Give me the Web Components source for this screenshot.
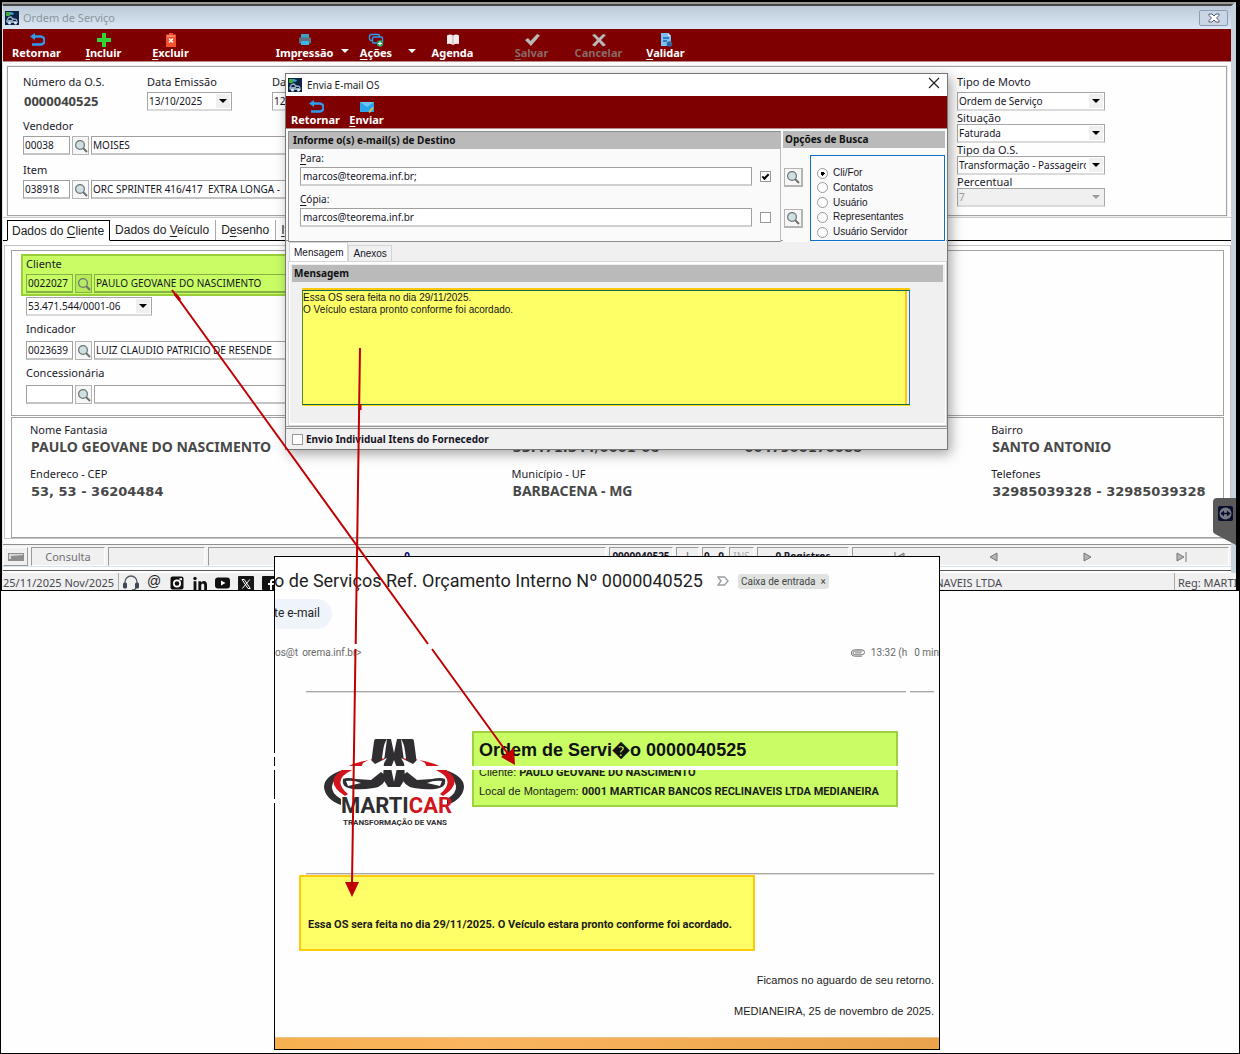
<!DOCTYPE html>
<html lang="pt-BR">
<head>
<meta charset="utf-8">
<meta name="viewport" content="width=device-width, initial-scale=1">
<title>Ordem de Serviço</title>
<style>
  body { margin: 0; background: #fefefe; font: 11px/16px "Noto Sans", sans-serif; color: #1a1a2a; }
  *, ::before { box-sizing: border-box; }
</style>
</head>
<body>
<app-desktop></app-desktop>

<script>
const BASE = `*, ::before, ::after { box-sizing: border-box; }
  button, input, select, textarea { font: inherit; color: inherit; margin: 0; }
  button { border: 0; padding: 0; background: none; }
  u { text-underline-offset: 2px; }`;

function define(name, html) {
  customElements.define(name, class extends HTMLElement {
    connectedCallback() {
      if (this.shadowRoot) return;
      const tpl = document.createElement('template');
      tpl.innerHTML = `<style>${BASE}</style>` + (typeof html === 'function' ? html(this) : html);
      this.attachShadow({ mode: 'open' }).append(tpl.content.cloneNode(true));
    }
  });
}

const ICONS = {
  app: ['0 0 14 14', `<rect width="14" height="14" fill="#0d2447"/><path d="M1 1h5l1 2-3 2H1z" fill="#3fae3c"/><path d="M5 1l4 1-1 2-3-1z" fill="#39a0e0"/><path d="M1 10l2-4 3-1 2 2 4 1 1 4H2z" fill="#8ea7bd"/><path d="M4 7h2l1 2H3zM8 9h3v1H8z" fill="#0d2447"/><circle cx="4.500" cy="12" r="1.500" fill="#d8e4ec"/><circle cx="10.500" cy="12" r="1.500" fill="#d8e4ec"/>`],
  back: ['0 0 16 14', `<path d="M6 0L1 3.500 6 7z" fill="#2e9bf0"/><path d="M4 3.500h7.500a3.800 3.800 0 0 1 0 8H3" fill="none" stroke="#2e9bf0" stroke-width="2.400"/>`],
  plus: ['0 0 14 14', `<path d="M5 0h4v5h5v4H9v5H5V9H0V5h5z" fill="#35d435"/>`],
  trash: ['0 0 14 14', `<path d="M5 0h4v1.500h3V14H2V1.500h3z" fill="#f4512c"/><path d="M3 3h8" stroke="#ffb49c"/><path d="M5 5.500l4 4M9 5.500l-4 4" stroke="#fff" stroke-width="1.500"/>`],
  print: ['0 0 14 14', `<path d="M3 1h8v4H3z" fill="#39a3c9"/><path d="M1 4.500h12v6H1z" fill="#5e7181"/><path d="M3 8h8v4H3z" fill="#3eb4e8"/>`],
  actions: ['0 0 16 14', `<rect x="1.500" y="1.500" width="10" height="6" rx="1.500" fill="none" stroke="#2e9bf0" stroke-width="1.400"/><rect x="4.500" y="4" width="10" height="6" rx="1.500" fill="#7f0000" stroke="#2e9bf0" stroke-width="1.400"/><circle cx="12" cy="10.500" r="3.200" fill="#2f9c62"/><path d="M12 8.500v4M10 10.500h4" stroke="#fff" stroke-width="1.200"/>`],
  book: ['0 0 14 14', `<path d="M1 2.500Q4 .5 7 2.500 10 .5 13 2.500V11q-3-1-6 1-3-2-6-1z" fill="#f4ecec"/><path d="M7 2.500V12" stroke="#c9a9a9"/>`],
  check: ['0 0 16 14', `<path d="M1 7l3-2 2.500 3L13 1l3 1.500L7 13z" fill="#b9b9b9"/>`],
  cross: ['0 0 16 14', `<path d="M1 2l3-1 4 4 4-4 3 1-5 5 5 5-3 1.500-4-4.500-4 4.500L1 12l5-5z" fill="#b9b9b9"/>`],
  doc: ['0 0 14 14', `<path d="M2 0h7l3 3v10H2z" fill="#7cc0f5"/><path d="M9 0l3 3H9z" fill="#d6ecff"/><path d="M4 5h6M4 8h4" stroke="#1467b3" stroke-width="1.400"/><circle cx="10.500" cy="11" r="2.800" fill="#33679b"/>`],
  mail: ['0 0 14 14', `<path d="M0 2h14v10H0z" fill="#29a4ef"/><path d="M0 2l7 5 7-5" fill="#6cc6fa"/><path d="M9 12.500l4-5" stroke="#e4c13c" stroke-width="1.800"/>`],
  lens: ['0 0 14 14', `<path d="M9 9l4 4" stroke="#6f6f6f" stroke-width="2"/><circle cx="6" cy="6" r="4.400" fill="var(--glass,#cfe0e2)" stroke="#6b7474" stroke-width="1.200"/>`],
  close: ['0 0 12 12', `<path d="M1 1l10 10M11 1L1 11" stroke="#222" stroke-width="1.200"/>`],
  mdiclose: ['0 0 12 10', `<path d="M1 1h3l2 2 2-2h3v1.500L8.500 5 11 7.500V9H8L6 7 4 9H1V7.500L3.500 5 1 2.500z" fill="#fff" stroke="#555b70" stroke-width="1"/>`],
  caret: ['0 0 8 4', `<path d="M0 0h8L4 4z" fill="currentColor"/>`],
  keyb: ['0 0 16 8', `<rect width="16" height="8" fill="#8d8d8d"/><path d="M1 1h14v1L3 3v3H1z" fill="#d9d9d9"/>`],
  first: ['0 0 12 10', `<path d="M1 0v10" stroke="#777"/><path d="M10 1v8L3 5z" fill="#b5b5b5" stroke="#777"/>`],
  prev: ['0 0 12 10', `<path d="M9 1v8L2 5z" fill="#b5b5b5" stroke="#777"/>`],
  next: ['0 0 12 10', `<path d="M3 1v8l7-4z" fill="#b5b5b5" stroke="#777"/>`],
  last: ['0 0 12 10', `<path d="M2 1v8l7-4zM11 0v10" fill="#b5b5b5" stroke="#777"/>`],
  headset: ['0 0 16 16', `<path d="M2 9V7a6 6 0 0 1 12 0v2M13 12q0 3-4 3" fill="none" stroke="#555b66" stroke-width="1.300"/><rect x="0" y="7.500" width="4" height="6" rx="1.500" fill="#3f4656"/><rect x="12" y="7.500" width="4" height="6" rx="1.500" fill="#3f4656"/>`],
  insta: ['0 0 14 14', `<rect x=".5" y=".5" width="13" height="13" rx="2" fill="#111"/><circle cx="7" cy="7.500" r="4" fill="#fff"/><circle cx="7" cy="7.500" r="2.300" fill="#111"/><path d="M9.500 2.200h2.500v2H9.500z" fill="#fff"/>`],
  linkedin: ['0 0 14 14', `<circle cx="2" cy="2.500" r="1.700" fill="#111"/><path d="M.6 5.200h2.800V14H.6zM5.400 5.200H8v1.200q1-1.500 2.800-1.500Q14 5 14 9v5h-2.800V9.500q0-2-1.400-2T8.200 9.500V14H5.400z" fill="#111"/>`],
  youtube: ['0 0 16 14', `<rect x="0" y="1.500" width="15" height="11" rx="3" fill="#111"/><path d="M6 4.500v5L10.500 7z" fill="#fff"/>`],
  xapp: ['0 0 16 16', `<rect width="16" height="16" rx="1" fill="#161616"/><path d="M4 3.500h2.300l6 9H10z" fill="none" stroke="#fff"/><path d="M11.800 3.500L4.300 12.500" stroke="#fff"/>`],
  facebook: ['0 0 14 14', `<rect width="14" height="14" rx="1" fill="#111"/><path d="M8 14V9H6V7h2V5.500Q8 3 10.500 3H12v2h-1.200q-.8 0-.8.800V7h2l-.3 2H10v5z" fill="#fff"/>`],
  important: ['0 0 12 10', `<path d="M1 1h6.500L11 5 7.500 9H1l3-4z" fill="none" stroke="#9aa0a6" stroke-width="1.400"/>`],
  clip: ['0 0 14 8', `<path d="M11.500 2H4a1.800 1.800 0 0 0 0 3.800h7A2.400 2.400 0 0 0 11 .8H3.600a3.200 3.200 0 0 0 0 6.400H11M4 3.900h6.500" fill="none" stroke="#777" stroke-width="1"/>`],
  remote: ['0 0 23 47', `<path d="M4 0h19v47L2 36Q0 35 0 33V4Q0 0 4 0z" fill="#5a5a5a"/><rect x="5" y="8" width="15" height="15" rx="2" fill="#0a0d2c"/><circle cx="12.500" cy="15.500" r="6" fill="#777a84"/><path d="M8 15.500h9" stroke="#0a0d2c" stroke-width="1.500"/><path d="M11 12.500v6l-3.500-3zM14 12.500v6l3.500-3z" fill="#0a0d2c"/>`]
};

define('ts-icon', el => {
  const [box, body] = ICONS[el.getAttribute('name')];
  const [, , w, h] = box.split(' ');
  return `<style>:host { display: inline-flex; flex: none; } svg { display: block; }</style>
  <svg viewBox="${box}" width="${w}" height="${h}" aria-hidden="true">${body}</svg>`;
});

define('ts-tool', el => `<style>
  :host { display: block; width: var(--tool-width, 67px); }
  button { display: flex; flex-direction: column; align-items: center; width: 100%; color: #fff; font: bold 11px/12px "Noto Sans", sans-serif; }
  button:disabled { color: #8a6a6a; }
</style><button type="button" ${el.hasAttribute('disabled') ? 'disabled' : ''}><ts-icon name="${el.getAttribute('icon')}"></ts-icon><span><slot></slot></span></button>`);

define('ts-toolbar', `<style>
  :host { display: flex; align-items: flex-start; height: 33px; padding-top: 4px; background: #7f0000; border-bottom: 1px solid #b98a8a; color: #fff; }
</style><slot></slot>`);

define('ts-menu-caret', el => `<style>
  :host { display: block; } button { display: flex; justify-content: center; align-items: center; width: 14px; height: 30px; color: #fff; padding-top: 6px; }
</style><button type="button" aria-label="${el.getAttribute('label')}"><ts-icon name="caret"></ts-icon></button>`);

define('ts-panel', `<style>
  :host { display: block; border: 1px solid #a2a2a2; outline: 1px solid #efefef; }
</style><slot></slot>`);

define('ts-select', el => `<style>
  :host { display: flex; flex-direction: column; }
  label { line-height: var(--label-line, 13px); margin-bottom: var(--label-gap, 0px); }
  .box { display: flex; position: relative; height: 19px; border: 1px solid #a6a6a6; border-bottom: 2px solid #dadada; background: #fff; }
  select { appearance: none; flex: 1; min-width: 0; border: 0; background: none; padding: 0 18px 0 1px; font: var(--value-font); color: #15151f; opacity: 1; outline: 0; }
  ts-icon { position: absolute; right: 1px; top: 1px; width: 14px; height: 14px; align-items: center; justify-content: center; background: #f0f0f0; color: #000; pointer-events: none; }
  .off { background: #f0f0f0; } .off select, .off ts-icon { color: #9b9b9b; }
</style>
${el.getAttribute('label') ? `<label for="s">${el.getAttribute('label')}</label>` : ''}
<div class="box ${el.hasAttribute('disabled') ? 'off' : ''}"><select id="s" ${el.hasAttribute('disabled') ? 'disabled' : ''} aria-label="${el.getAttribute('label') || el.getAttribute('name')}"><option>${el.getAttribute('value')}</option></select><ts-icon name="caret"></ts-icon></div>`);

define('ts-lookup', el => `<style>
  :host { display: flex; flex-direction: column; }
  label { line-height: 16px; margin-bottom: var(--label-gap, 2px); }
  .row { display: flex; gap: 2px; height: 19px; }
  input { border: 1px solid #a0a0a0; border-bottom-width: 2px; border-bottom-color: #c4c4c4; background: var(--field-bg, #fff); padding: 0 1px; font: var(--value-font); color: #15151f; min-width: 0; border-radius: 0; }
  input.code { width: 47px; } input.name { flex: 1; }
  :host([tone=green]) input { border-color: #86b145; }
  :host([tone=green]) button { border-color: #86b145; background: #b5ea58; }
  button { width: 17px; border: 1px solid #b4b4b4; background: #f6f6f6; display: flex; align-items: center; justify-content: center; }
</style>
<label for="c">${el.getAttribute('label')}</label>
<div class="row"><input id="c" class="code" value="${el.getAttribute('code')}"><button type="button" aria-label="Pesquisar ${el.getAttribute('label')}"><ts-icon name="lens"></ts-icon></button><input class="name" aria-label="Nome ${el.getAttribute('label')}" value="${el.getAttribute('value')}"></div>`);

define('ts-fact', el => `<style>
  :host { display: block; min-width: 0; white-space: nowrap; }
  dl, dd { margin: 0; } dt { line-height: 16px; }
  dd { padding-left: 1px; font: bold 14px/17px "Noto Sans", sans-serif; color: #484848; }
  dd.num { font: bold 13px/19px "DejaVu Sans", sans-serif; }
</style><dl><dt>${el.getAttribute('label') || '&nbsp;'}</dt><dd class="${el.hasAttribute('numeric') ? 'num' : ''}"><slot></slot></dd></dl>`);

define('os-header', `<style>
  :host { display: flex; justify-content: space-between; height: 148px; padding: 7px 0 0 15px; --value-font: 10px/14px "Noto Sans", sans-serif; }
  .left { display: flex; flex-direction: column; gap: 7px; width: 500px; }
  .first { display: flex; gap: 40px; }
  .number { width: 84px; }
  .number p { margin: 0; line-height: 16px; white-space: nowrap; } .number strong { display: block; margin-top: 2px; padding-left: 1px; font: bold 13px/19px "Noto Sans", sans-serif; color: #444; }
  .date { width: 85px; --label-line: 16px; --label-gap: 2px; }
  .right { display: flex; flex-direction: column; width: 269px; }
  .right ts-select { width: 148px; }
  .right ts-select:first-child { --label-line: 16px; --label-gap: 2px; }
</style>
<div class="left">
  <div class="first">
    <div class="number"><p>Número da O.S.</p><strong>0000040525</strong></div>
    <ts-select class="date" label="Data Emissão" value="13/10/2025"></ts-select>
    <ts-select class="date" label="Data" value="12/11/2025"></ts-select>
  </div>
  <ts-lookup label="Vendedor" code="00038" value="MOISES"></ts-lookup>
  <ts-lookup label="Item" code="038918" value="ORC SPRINTER 416/417  EXTRA LONGA -"></ts-lookup>
</div>
<div class="right">
  <ts-select label="Tipo de Movto" value="Ordem de Serviço"></ts-select>
  <ts-select label="Situação" value="Faturada"></ts-select>
  <ts-select label="Tipo da O.S." value="Transformação - Passageiros"></ts-select>
  <ts-select label="Percentual" value="7" disabled></ts-select>
</div>`);

define('os-tabs', `<style>
  :host { display: flex; height: 21px; padding: 0 0 0 4px; border-bottom: 1px solid #000; font: 12px/20px "Liberation Sans", sans-serif; color: #222; }
  button { padding: 0 6px 0 5px; height: 20px; white-space: nowrap; border-right: 1px solid #aaa; }
  button[aria-selected=true] { height: 21px; border: 1px solid #000; border-bottom-color: #fff; background: #fff; padding: 0 5px 0 4px; }
</style>
<button role="tab" aria-selected="true">Dados do <u>C</u>liente</button><button role="tab">Dados do <u>V</u>eículo</button><button role="tab">D<u>e</u>senho</button><button role="tab"><u>I</u>tens</button>`);

define('os-client', `<style>
  :host { display: block; padding: 4px 6px 0 6px; border: 1px solid #c4c4c4; --value-font: 10px/14px "Noto Sans", sans-serif; }
  ts-panel { outline: 0; } ts-panel + ts-panel { margin-top: 1px; }
  .fields { height: 164px; padding: 3px 9px 0; --label-gap: 4px; }
  .col { width: 500px; display: flex; flex-direction: column; gap: 5px; padding: 0 5px; }
  .mark { width: 500px; height: 42px; padding: 0 3px; border: 2px solid #98cf38; background: #c8fd64; --field-bg: #c8fd64; --glass: #b8ec66; --label-gap: 2px; }
  .doc { width: 126px; margin-top: 1px; }
  .facts { height: 119px; padding: 4px 0 0 18px; display: grid; grid-template-columns: 482fr 232fr 248fr 232fr; grid-auto-rows: 35px; row-gap: 9px; align-content: start; }
</style>
<ts-panel><div class="fields">
  <div class="mark"><ts-lookup tone="green" label="Cliente" code="0022027" value="PAULO GEOVANE DO NASCIMENTO"></ts-lookup></div>
  <div class="col">
    <ts-select class="doc" name="CPF/CNPJ" value="53.471.544/0001-06"></ts-select>
    <ts-lookup label="Indicador" code="0023639" value="LUIZ CLAUDIO PATRICIO DE RESENDE"></ts-lookup>
    <ts-lookup label="Concessionária" code="" value=""></ts-lookup>
  </div>
</div></ts-panel>
<ts-panel><div class="facts">
  <ts-fact label="Nome Fantasia">PAULO GEOVANE DO NASCIMENTO</ts-fact>
  <ts-fact numeric>53.471.544/0001-06</ts-fact>
  <ts-fact numeric>0047900170088</ts-fact>
  <ts-fact label="Bairro">SANTO ANTONIO</ts-fact>
  <ts-fact label="Endereco - CEP" numeric>53, 53 - 36204484</ts-fact>
  <ts-fact label="Município - UF">BARBACENA - MG</ts-fact>
  <span></span>
  <ts-fact label="Telefones" numeric>32985039328 - 32985039328</ts-fact>
</div></ts-panel>`);

define('os-status', `<style>
  :host { display: flex; gap: 3px; height: 22px; padding: 2px 2px 0 0; background: #f4f4f4; border-top: 1px solid #8e8e8e; font: bold 10px/17px "Noto Sans", sans-serif; }
  span, nav { display: flex; align-items: center; justify-content: center; height: 19px; overflow: hidden; white-space: nowrap; background: #f0f0f0; border: 1px solid #fdfdfd; border-top-color: #9a9a9a; border-left-color: #9a9a9a; flex: none; }
  .key { width: 25px; border-color: #fdfdfd #9a9a9a #9a9a9a #fdfdfd; } .mode { width: 74px; color: #707070; font: 11px/17px "Noto Sans", sans-serif; } .gap { width: 97px; }
  .zero { width: 398px; color: #00007a; } .os { width: 64px; } .dot { width: 23px; color: #777; } .pair { width: 24px; } .ins { width: 25px; color: #aaa; font-weight: 400; } .reg { width: 92px; }
  nav { flex: 1; justify-content: space-around; }
  button { display: flex; }
</style>
<span class="key"><ts-icon name="keyb"></ts-icon></span><span class="mode">Consulta</span><span class="gap"></span><span class="zero">0</span><span class="os">0000040525</span><span class="dot">|</span><span class="pair">0 - 0</span><span class="ins">INS</span><span class="reg">0 Registros</span>
<nav aria-label="Registros"><button aria-label="Primeiro"><ts-icon name="first"></ts-icon></button><button aria-label="Anterior"><ts-icon name="prev"></ts-icon></button><button aria-label="Próximo"><ts-icon name="next"></ts-icon></button><button aria-label="Último"><ts-icon name="last"></ts-icon></button></nav>`);

define('os-footer', `<style>
  :host { display: flex; height: 17px; overflow: hidden; background: #f0f0f0; color: #484850; font: 11px/19px "Noto Sans", sans-serif; white-space: nowrap; }
  .date { width: 117px; padding-left: 1px; border-right: 1px solid #aaa; }
  .links { display: flex; gap: 7px; padding-left: 4px; }
  a { width: 16px; display: flex; justify-content: center; padding-top: 3px; color: #222; text-decoration: none; }
  a.at { padding-top: 1px; font: 14px/15px "Liberation Sans", sans-serif; }
  .links a:first-child { padding-top: 2px; }
  .company { flex: 1; text-align: right; padding-right: 172px; }
  .reg { width: 62px; padding-left: 3px; border-left: 1px solid #aaa; overflow: hidden; }
</style>
<span class="date">25/11/2025 Nov/2025</span>
<div class="links"><a href="#suporte" aria-label="Suporte"><ts-icon name="headset"></ts-icon></a><a class="at" href="#email">@</a><a href="#instagram" aria-label="Instagram"><ts-icon name="insta"></ts-icon></a><a href="#linkedin" aria-label="LinkedIn"><ts-icon name="linkedin"></ts-icon></a><a href="#youtube" aria-label="YouTube"><ts-icon name="youtube"></ts-icon></a><a href="#x" aria-label="X"><ts-icon name="xapp"></ts-icon></a><a href="#facebook" aria-label="Facebook"><ts-icon name="facebook"></ts-icon></a></div>
<span class="company">MARTICAR BANCOS RECLINAVEIS LTDA</span><span class="reg">Reg: MARTICAR</span>`);

define('os-window', `<style>
  :host { display: flex; flex-direction: column; border: solid #000; border-width: 2px 4px 1px 2px; background: #fefefe; position: relative; }
  .frame { border: solid #9a9a9a; border-width: 4px 0 0 0; border-top-style: ridge; border-right: 5px solid #c6d2de; border-left: 1px solid #dfe6ee; }
  .title { display: flex; align-items: center; gap: 4px; height: 23px; padding: 0 3px 0 2px; background: linear-gradient(#bccad9, #dbe7f3); color: #8d959d; }
  .title h1 { flex: 1; margin: 0; padding-top: 1px; font: 11px/20px "Noto Sans", sans-serif; }
  .title button { width: 29px; height: 16px; display: flex; align-items: center; justify-content: center; border: 1px solid #8e9bb5; border-radius: 2px; background: #c8d6e6; }
  .gap { width: 67px; } .small { --tool-width: 48px; }
  ts-menu-caret.c2 { margin-left: 5px; } .sp { width: 12px; }
  .top { margin: 4px 4px 0 4px; }
  .sep { height: 3px; border-top: 1px solid #ccc; margin-top: 1px; }
  .client { margin: 4px 0 5px 1px; }
  .edge { height: 5px; border-top: 1px solid #d5e2f0; border-bottom: 1px solid #555; margin-bottom: 2px; }
  .remote { position: absolute; right: 0; top: 496px; }
</style>
<div class="frame">
  <div class="title"><ts-icon name="app"></ts-icon><h1>Ordem de Serviço</h1><button aria-label="Fechar"><ts-icon name="mdiclose"></ts-icon></button></div>
  <ts-toolbar>
    <ts-tool icon="back">Retornar</ts-tool><ts-tool icon="plus"><u>I</u>ncluir</ts-tool><ts-tool icon="trash"><u>E</u>xcluir</ts-tool><span class="gap"></span>
    <ts-tool icon="print">Imp<u>r</u>essão</ts-tool><ts-menu-caret label="Opções de impressão"></ts-menu-caret>
    <ts-tool class="small" icon="actions"><u>A</u>ções</ts-tool><ts-menu-caret class="c2" label="Mais ações"></ts-menu-caret>
    <ts-tool icon="book">Agenda</ts-tool><span class="sp"></span>
    <ts-tool icon="check" disabled><u>S</u>alvar</ts-tool><ts-tool icon="cross" disabled>Cancelar</ts-tool><ts-tool icon="doc"><u>V</u>alidar</ts-tool>
  </ts-toolbar>
  <ts-panel class="top"><os-header></os-header></ts-panel>
  <div class="sep"></div>
  <os-tabs></os-tabs>
  <os-client class="client"></os-client>
  <os-status></os-status>
  <div class="edge"></div>
</div>
<os-footer></os-footer>
<ts-icon class="remote" name="remote"></ts-icon>`);

define('email-dialog', `<style>
  :host { display: flex; flex-direction: column; border: 1px solid #777; background: #f0f0f0; box-shadow: 3px 4px 12px rgba(0,0,0,.35); color: #15151f; }
  .title { display: flex; align-items: center; gap: 5px; height: 22px; padding: 0 7px 0 2px; background: #fff; }
  h2 { flex: 1; margin: 0; font: 10px/20px "Noto Sans", sans-serif; color: #222; }
  h3 { margin: 0; padding: 0 4px; background: #bababa; font: bold 10px/17px "Noto Sans", sans-serif; color: #111; }
  ts-toolbar { --tool-width: 51px; padding-left: 4px; }
  .groups { display: grid; grid-template-columns: 493fr 163fr; gap: 2px; padding: 2px 1px 0 2px; height: 112px; background: #fafafa; border-bottom: 1px solid #999; }
  .group { border: 1px solid #8e8e8e; border-right-color: #bbb; background: #fafafa; }
  .busca { border: solid #fafafa; border-width: 0 1px 1px 0; }
  .busca h3 { padding: 0 2px; }
  .addr { padding: 1px 9px 0 11px; display: grid; grid-template-columns: 452fr 11px; column-gap: 8px; align-items: center; }
  .addr label { grid-column: 1 / 3; line-height: 17px; font-size: 10px; }
  .addr label.second { margin-top: 5px; }
  .addr input[type=text] { height: 19px; border: 1px solid #a0a0a0; border-bottom: 2px solid #cfcfcf; padding: 0 2px; background: #fff; font: 10px/14px "Noto Sans", sans-serif; min-width: 0; }
  input[type=checkbox] { appearance: none; width: 11px; height: 11px; border: 1px solid #999; background: #fff; }
  input[type=checkbox]:checked { display: grid; place-items: center; }
  input[type=checkbox]:checked::before { content: ""; width: 7px; height: 4px; border: solid #000; border-width: 0 0 2px 2px; transform: rotate(-45deg); margin-bottom: 2px; }
  .search { display: flex; gap: 7px; padding-left: 1px; }
  .lens { display: flex; flex-direction: column; gap: 22px; padding-top: 20px; }
  .lens button { width: 19px; height: 19px; border: 1px solid #b4b4b4; border-width: 1px 2px 2px 1px; background: #f6f6f6; display: flex; align-items: center; justify-content: center; }
  fieldset { flex: 1; display: flex; flex-direction: column; justify-content: space-between; height: 86px; margin: 7px 0 0; padding: 10px 0 1px 6px; border: 1px solid #0f70c8; min-width: 0; }
  fieldset label { display: flex; align-items: center; gap: 5px; font: 10px/14px "Liberation Sans", sans-serif; height: 14px; }
  input[type=radio] { appearance: none; margin: 0; width: 11px; height: 11px; border: 1px solid #999; border-radius: 50%; background: #fff; }
  input[type=radio]:checked { background: radial-gradient(#000 0 2px, #fff 2px); }
  .tabs { display: flex; align-items: flex-end; height: 21px; padding: 1px 3px 0; font: 10px/16px "Liberation Sans", sans-serif; }
  .tabs button { padding: 0 4px; height: 17px; border: 1px solid #d5d5d5; border-bottom: 0; }
  .tabs button[aria-selected=true] { height: 20px; background: #fff; }
  .page { margin: 0 1px 1px 3px; border: 1px solid #fff; border-top-width: 2px; border-bottom: 2px solid #fff; outline: 1px solid #d5d5d5; height: 163px; padding: 1px 2px; }
  .page h3 { padding: 0 2px; }
  .area { margin: 6px 33px 0 10px; }
  textarea { display: block; width: 100%; height: 115px; resize: none; border: 1px solid #1d73c4; border-top-color: #12684b; border-bottom-color: #12684b; border-left-color: #548a2a; padding: 1px 0; background: linear-gradient(#feff66, #feff66) no-repeat 0 0 / calc(100% - 4px) 100%, linear-gradient(#ffc90e, #ffc90e) no-repeat 0 0 / calc(100% - 2px) 100%, #f0f0f0; font: 10px/12px "Liberation Sans", sans-serif; color: #15151f; outline: 0; overflow: hidden; }
  .hl { border-top: 2px solid #ffc90e; border-bottom: 1px solid #ffd80e; }
  .foot { display: flex; align-items: center; gap: 3px; flex: 1; padding: 0 6px; border-top: 3px double #999; font: bold 10px/16px "Noto Sans", sans-serif; }
</style>
<div class="title"><ts-icon name="app"></ts-icon><h2>Envia E-mail OS</h2><button aria-label="Fechar"><ts-icon name="close"></ts-icon></button></div>
<ts-toolbar><ts-tool icon="back">Retornar</ts-tool><ts-tool icon="mail"><u>E</u>nviar</ts-tool></ts-toolbar>
<div class="groups">
  <div class="group"><h3>Informe o(s) e-mail(s) de Destino</h3>
    <div class="addr">
      <label for="para"><u>P</u>ara:</label><input id="para" type="text" value="marcos@teorema.inf.br;"><input type="checkbox" checked aria-label="Enviar para">
      <label for="copia" class="second"><u>C</u>ópia:</label><input id="copia" type="text" value="marcos@teorema.inf.br"><input type="checkbox" aria-label="Enviar cópia">
    </div>
  </div>
  <div class="group busca"><h3>Opções de Busca</h3>
    <div class="search">
      <div class="lens"><button aria-label="Buscar destinatário"><ts-icon name="lens"></ts-icon></button><button aria-label="Buscar cópia"><ts-icon name="lens"></ts-icon></button></div>
      <fieldset aria-label="Opções de Busca">
        <label><input type="radio" name="b" checked>Cli/For</label><label><input type="radio" name="b">Contatos</label><label><input type="radio" name="b">Usuário</label><label><input type="radio" name="b">Representantes</label><label><input type="radio" name="b">Usuário Servidor</label>
      </fieldset>
    </div>
  </div>
</div>
<div class="tabs"><button role="tab" aria-selected="true">Mensagem</button><button role="tab">Anexos</button></div>
<div class="page"><h3>Mensagem</h3><div class="area"><div class="hl"><textarea aria-label="Mensagem">Essa OS sera feita no dia 29/11/2025.
O Veículo estara pronto conforme foi acordado.</textarea></div></div></div>
<div class="foot"><input type="checkbox" id="ind"><label for="ind">Envio Individual Itens do Fornecedor</label></div>`);

define('marticar-logo', `<style>:host { display: block; flex: none; } svg { display: block; overflow: visible; }</style>
<svg width="144" height="92" viewBox="0 0 144 92" role="img" aria-label="Marticar">
  <path d="M20 32Q1 38 1 49q1 12 17 18v-6Q8 55 9 48q1-8 15-16z" fill="#302e30"/>
  <path d="M122 32q19 6 19 17-1 12-17 18v-6q10-6 9-13-1-8-15-16z" fill="#302e30"/>
  <path d="M22 58Q4 46 14 36 30 20 71 20t57 16q10 10-8 22l-3-2q12-10 5-18-14-13-51-13T20 38q-7 8 5 18z" fill="#d2151c"/>
  <path d="M20 41q4-2 13 0l15 1 10-8 5 4q-1 10-12 12-20 3-28-1-4-2-3-8z" fill="#302e30"/>
  <path d="M122 41q-4-2-13 0l-15 1-10-8-5 4q1 10 12 12 20 3 28-1 4-2 3-8z" fill="#302e30"/>
  <path d="M23 43q8-1 15 2l-13 3zM119 43q-8-1-15 2l13 3z" fill="#fff"/>
  <path d="M53 1h11q-3 4-4 12l-2 14-8 4-2-4Q50 10 51 4q0-3 2-3zM89 1H78q3 4 4 12l2 14 8 4 2-4q-2-17-3-23 0-3-2-3z" fill="#302e30"/>
  <path d="M64 1h4l3 14 3-14h4l3 22 1 18-5 8H65l-5-8 1-18z" fill="#302e30"/>
  <path d="M47 21l-7 4-4 9-9 5 17 1 12-6 8-14-12 6zM95 21l7 4 4 9 9 5-17 1-12-6-8-14 12 6z" fill="#fff"/>
  <path d="M68 30l3 14 3-14-3-8z" fill="#fff"/>
  <g font-family="Roboto, sans-serif" font-weight="bold">
    <text x="18" y="75" font-size="22" fill="#302e30">MARTI<tspan fill="#d2151c">CAR</tspan></text>
    <text x="20" y="87" font-size="8" fill="#302e30">TRANSFORMAÇÃO DE VANS</text>
  </g>
</svg>`);

define('email-view', `<style>
  :host { display: flex; flex-direction: column; border: 1px solid #000; background: #fefefe; overflow: hidden; color: #1b1b1b; font: 11px/16px "Liberation Sans", sans-serif; }
  .subject, .pill, .meta, .rules, .order, .note, .sign, .base { flex: none; }
  .subject { display: flex; align-items: center; height: 42px; padding-top: 6px; white-space: nowrap; }
  h2 { margin: 0 14px 0 -1px; font: 18px/24px Roboto, sans-serif; color: #1f1f1f; }
  .chip { margin-left: 9px; height: 15px; padding: 0 3px; border-radius: 3px; background: #e1e3e1; font: 10px/15px Roboto, sans-serif; color: #444; }
  .pill { align-self: flex-start; height: 30px; padding: 0 12px 0 0; margin-left: -1px; border-radius: 0 15px 15px 0; background: #eff3fa; font: 12px/28px Roboto, sans-serif; color: #222; }
  .meta { display: flex; align-items: center; height: 16px; margin: 16px 0 0; color: #666; font: 10px/16px Roboto, sans-serif; white-space: nowrap; }
  .meta .to { margin-left: 4px; } .meta ts-icon { margin: 0 6px 0 auto; } .meta .ago { margin: 0 0 0 7px; }
  .rules { display: flex; gap: 4px; margin: 30px 5px 0 31px; }
  hr { margin: 0; border: 0; height: 2px; background: #a8a8a8; border-bottom: 1px solid #ddd; flex: 600; } hr + hr { flex: 24; }
  .order { display: flex; align-items: flex-start; margin: 38px 41px 0 48px; }
  .order marticar-logo { margin-top: 7px; }
  .box { flex: 1; min-width: 0; margin-left: 5px; height: 76px; padding: 4px 5px; border: 2px solid #9fd040; background: #c8fd64; }
  .box h3 { margin: 0; font: bold 18px/26px "Liberation Sans", sans-serif; color: #111; }
  .box p { margin: 0; line-height: 19px; white-space: nowrap; }
  .box b, .note { font-family: Roboto, sans-serif; font-weight: bold; }
  .end { flex: none; margin: 43px 5px 0 31px; }
  .note { width: 456px; height: 76px; margin: 0 0 0 24px; padding: 40px 7px 0; border: 2px solid #fdca0c; background: #feff66; white-space: nowrap; }
  .sign { margin: 21px 5px 0; text-align: right; } .sign p { margin: 0 0 15px; }
  .base { height: 12px; margin-top: auto; background: linear-gradient(90deg, #f6b04f, #fab560 30%, #f2ae55 60%, #e8a34c); border-top: 1px solid #e9c48f; }
</style>
<div class="subject"><h2>o de Serviços Ref. Orçamento Interno Nº 0000040525</h2><ts-icon name="important"></ts-icon><span class="chip">Caixa de entrada&nbsp; ×</span></div>
<div class="pill">te e-mail</div>
<div class="meta"><span>os@t</span><span class="to">orema.inf.br&gt;</span><ts-icon name="clip"></ts-icon><span>13:32 (h</span><span class="ago">0 min</span></div>
<div class="rules"><hr><hr></div>
<div class="order"><marticar-logo></marticar-logo>
  <div class="box"><h3>Ordem de Servi&#xFFFD;o 0000040525</h3><p>Cliente: <b>PAULO GEOVANE DO NASCIMENTO</b></p><p>Local de Montagem: <b>0001 MARTICAR BANCOS RECLINAVEIS LTDA MEDIANEIRA</b></p></div>
</div>
<hr class="end">
<div class="note">Essa OS sera feita no dia 29/11/2025. O Veículo estara pronto conforme foi acordado.</div>
<div class="sign"><p>Ficamos no aguardo de seu retorno.</p><p>MEDIANEIRA, 25 de novembro de 2025.</p></div>
<div class="base"></div>`);

define('note-arrows', `<style>:host { display: block; pointer-events: none; } svg { display: block; }</style>
<svg width="1240" height="1054" viewBox="0 0 1240 1054" aria-hidden="true">
  <g fill="#fff"><path d="M272 766h662v4H272zM273 753h3v4h-3zM273 799h3v4h-3z"/></g>
  <g fill="none" stroke="#c00000" stroke-width="2"><path d="M172 290L428 644M432 649L508 754M360 348L355.700 644M355.500 649L352 884"/><path d="M175 294l5 6M360 404v6" stroke-width="3"/></g>
  <path d="M501 757l13-9 1 17zM345 882h14l-7 15z" fill="#c00000"/>
</svg>`);

define('app-desktop', `<style>
  :host { display: flex; flex-direction: column; position: relative; min-height: 100vh; overflow: hidden; }
  os-window { flex: none; }
  .sheet { flex: 1; min-height: 463px; border: solid #000; border-width: 0 1px 1px 1px; }
  email-dialog { position: absolute; left: 285px; top: 73px; width: 663px; height: 377px; }
  email-view { position: absolute; left: 274px; top: 556px; width: 666px; height: 494px; }
  note-arrows { position: absolute; left: 0; top: 0; }
</style>
<os-window></os-window>
<div class="sheet"></div>
<email-dialog></email-dialog>
<email-view></email-view>
<note-arrows></note-arrows>`);
</script>
</body>
</html>
